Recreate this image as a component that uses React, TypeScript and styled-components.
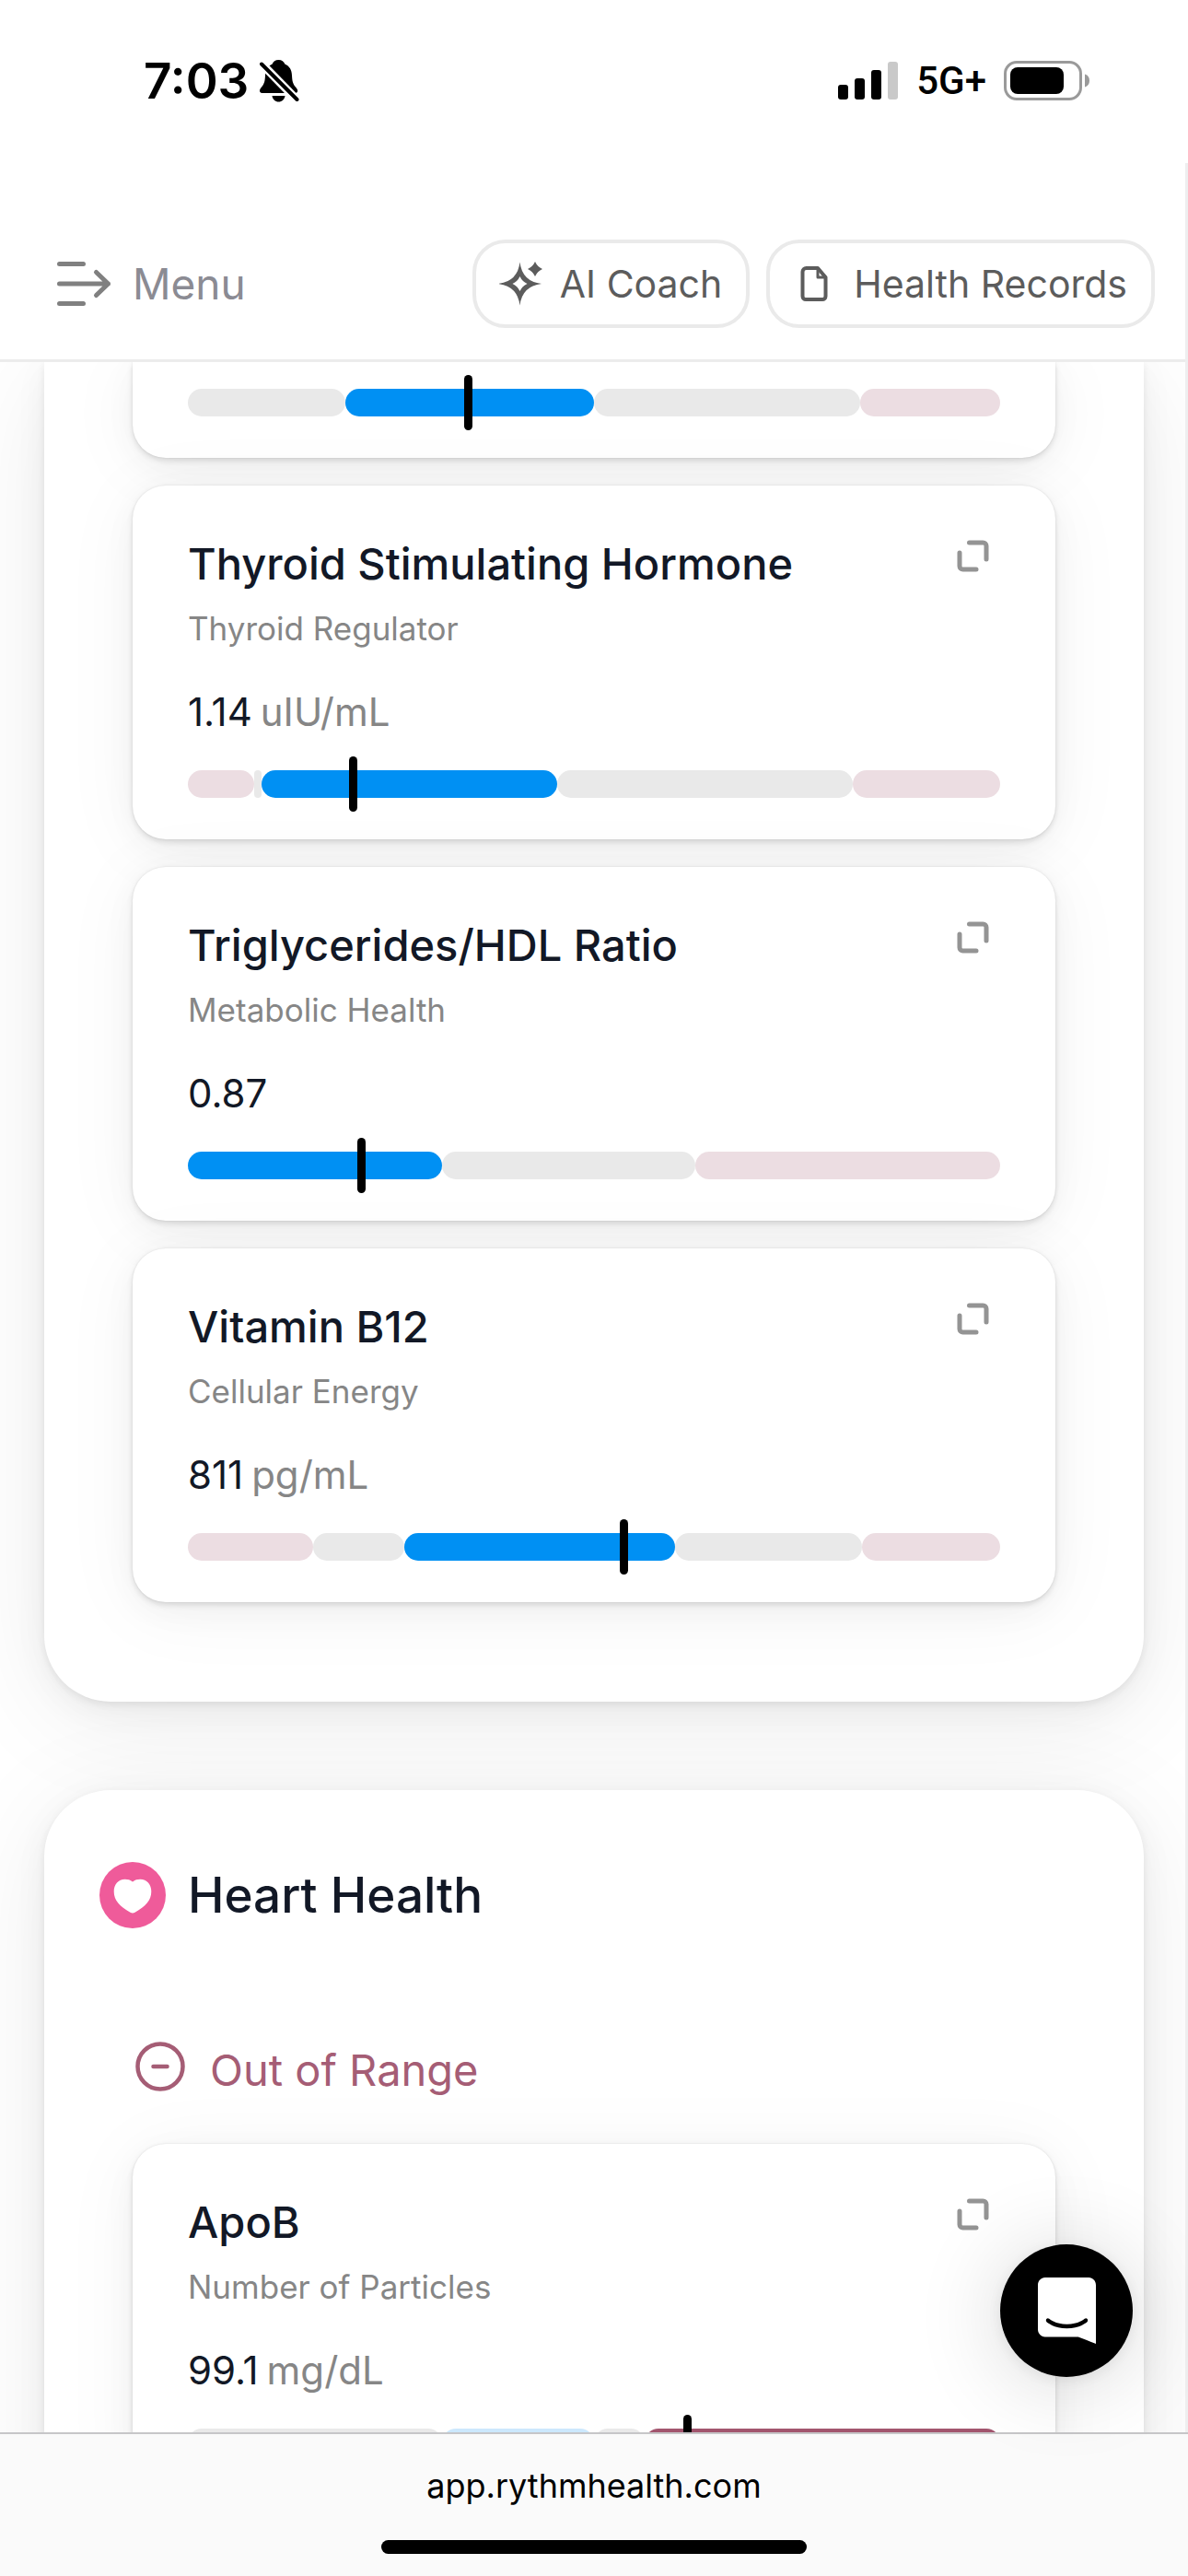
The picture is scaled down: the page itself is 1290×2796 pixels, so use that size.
import React from "react";
import styled, { createGlobalStyle } from "styled-components";

type Tone = "low" | "mid" | "good" | "goodMuted" | "bad";

interface Segment {
  tone: Tone;
  size: number;
}

interface Marker {
  name: string;
  role: string;
  value: string;
  unit?: string;
  segments: Segment[];
  position: number;
}

const tones: Record<Tone, string> = {
  low: "#ecdde2",
  mid: "#e9e9e9",
  good: "#0090f3",
  goodMuted: "#cce8fd",
  bad: "#a2556e",
};

const GlobalStyle = createGlobalStyle`
  * { box-sizing: border-box; }
  body {
    margin: 0;
    background: #ffffff;
    font-family: Inter, "Liberation Sans", sans-serif;
    color: #121826;
  }
  h2, h3, h4, p { margin: 0; font-weight: 400; }
  button { font-family: inherit; cursor: pointer; }
  svg { display: block; flex: none; }
`;

const Screen = styled.div`
  display: flex;
  flex-direction: column;
  height: 100vh;
  overflow: hidden;
  background: #ffffff;
`;

const StatusBar = styled.div`
  display: flex;
  justify-content: space-between;
  align-items: center;
  flex: none;
  height: 177px;
  padding: 0 106px 2px 156px;
  color: #000000;
`;

const StatusGroup = styled.div<{ $gap: number }>`
  display: flex;
  align-items: center;
  gap: ${(p) => p.$gap}px;
`;

const Clock = styled.span`
  font-size: 53px;
  line-height: 60px;
  font-weight: 600;
`;

const Network = styled.span`
  font-family: Roboto, sans-serif;
  font-size: 42px;
  line-height: 48px;
  font-weight: 500;
`;

const Page = styled.div`
  display: flex;
  flex-direction: column;
  flex: 1;
  min-height: 0;
  border-right: 3px solid #eeeeef;
`;

const Header = styled.header`
  display: flex;
  justify-content: space-between;
  align-items: center;
  flex: none;
  padding: 83px 33px 34px 60px;
  border-bottom: 3px solid #ececec;
  background: #ffffff;
`;

const MenuButton = styled.button`
  display: flex;
  align-items: center;
  gap: 22px;
  padding: 0;
  border: 0;
  background: none;
  color: #8b8b93;
  font-size: 46px;
  line-height: 60px;
`;

const Actions = styled.nav`
  display: flex;
  gap: 18px;
`;

const ActionButton = styled.button`
  display: flex;
  align-items: center;
  gap: 18px;
  height: 96px;
  padding: 0 26px 0 25px;
  border: 4px solid #eaeaea;
  border-radius: 36px;
  background: #ffffff;
  color: #5c5c5c;
  font-size: 41px;
  line-height: 60px;
  white-space: nowrap;
`;

const Content = styled.main`
  display: flex;
  flex-direction: column;
  gap: 96px;
  flex: 1;
  min-height: 0;
  overflow: hidden;
  padding: 0 45px 0 48px;
`;

const Panel = styled.section<{ $continued?: boolean }>`
  flex: none;
  padding: ${(p) => (p.$continued ? "0" : "78px")} 0 108px;
  border-radius: ${(p) => (p.$continued ? "0 0 72px 72px" : "72px")};
  background: #ffffff;
  box-shadow:
    0 3px 9px rgba(0, 0, 0, 0.07),
    0 9px 36px rgba(0, 0, 0, 0.05),
    0 18px 120px rgba(0, 0, 0, 0.08);
`;

const PanelHead = styled.div`
  display: flex;
  align-items: center;
  gap: 24px;
  padding: 0 60px;
  margin-bottom: 123px;
`;

const PanelTitle = styled.h2`
  font-size: 53px;
  line-height: 72px;
  font-weight: 500;
`;

const RangeHead = styled.div`
  display: flex;
  align-items: flex-start;
  gap: 24px;
  padding: 0 96px;
  margin-bottom: 49px;
  color: #a55d75;
`;

const RangeTitle = styled.h3`
  font-size: 47px;
  line-height: 62px;
`;

const CardList = styled.div`
  display: flex;
  flex-direction: column;
  gap: 30px;
  padding: 0 96px;
`;

const Card = styled.article<{ $continued?: boolean }>`
  padding: ${(p) => (p.$continued ? "29px" : "54px")} 60px 45px;
  border-radius: ${(p) => (p.$continued ? "0 0 36px 36px" : "36px")};
  background: #ffffff;
  box-shadow:
    0 0 2px rgba(0, 0, 0, 0.1),
    0 3px 6px rgba(0, 0, 0, 0.12),
    0 9px 36px rgba(0, 0, 0, 0.04),
    0 9px 84px rgba(0, 0, 0, 0.05);
`;

const CardHead = styled.div`
  display: flex;
  justify-content: space-between;
  align-items: flex-start;
`;

const CardTitle = styled.h4`
  font-size: 47px;
  line-height: 62px;
  font-weight: 500;
`;

const ExpandButton = styled.button`
  display: flex;
  padding: 5px 12px;
  border: 0;
  background: none;
  color: #949494;
`;

const Role = styled.p`
  margin-top: 15px;
  color: #868686;
  font-size: 35px;
  line-height: 48px;
`;

const Reading = styled.p`
  display: flex;
  gap: 9px;
  margin: 37px 0 33px;
  font-size: 42px;
  line-height: 60px;
`;

const Unit = styled.span`
  color: #868686;
`;

const Bar = styled.div`
  position: relative;
  display: flex;
  height: 30px;
`;

const BarSegment = styled.span<{ $tone: Tone }>`
  border-radius: 15px;
  background: ${(p) => tones[p.$tone]};
`;

const Pointer = styled.span`
  position: absolute;
  top: -15px;
  bottom: -15px;
  width: 9px;
  margin-left: -5px;
  border-radius: 5px;
  background: #000000;
`;

const ChatButton = styled.button`
  position: fixed;
  right: 60px;
  bottom: 216px;
  display: flex;
  justify-content: center;
  align-items: center;
  width: 144px;
  height: 144px;
  padding: 0;
  border: 0;
  border-radius: 50%;
  background: #000000;
  color: #ffffff;
  box-shadow:
    0 3px 18px rgba(0, 0, 0, 0.08),
    0 6px 96px rgba(0, 0, 0, 0.16);
`;

const BrowserBar = styled.footer`
  display: flex;
  flex-direction: column;
  align-items: center;
  justify-content: space-between;
  flex: none;
  height: 156px;
  padding: 32px 0 24px;
  border-top: 2px solid #c6c6c8;
  background: #fafafa;
`;

const Address = styled.a`
  color: #000000;
  font-size: 36px;
  line-height: 48px;
  text-decoration: none;
`;

const HomeIndicator = styled.span`
  width: 462px;
  height: 15px;
  border-radius: 8px;
  background: #000000;
`;

const BellOff = () => (
  <svg width="43" height="46" viewBox="0 0 43 46" aria-label="Silent mode">
    <path
      d="M20.500 0c3.500 0 5.800 1.800 6.800 4.600C32.500 7 34.800 11 35 17c.3 6 1 9 4 12.500 1.500 1.800 2.200 3 2.200 4 0 1.500-1 2.500-2.500 2.500H2.500C1 36 0 35 0 33.500c0-1 .5-2.200 2-4C5 26 5.700 23 6 17c.3-6 2.800-10 7.700-12.400C14.500 1.800 17 0 20.500 0z"
      fill="#000"
    />
    <path d="M13.500 39h14c-.6 4-3.400 6.500-7 6.500s-6.400-2.500-7-6.500z" fill="#000" />
    <path d="M-1 1l43 44" stroke="#fff" strokeWidth="9" />
    <path d="M2 4.500l38.500 38.500" stroke="#000" strokeWidth="4" strokeLinecap="round" />
  </svg>
);

const Signal = () => (
  <svg width="66" height="42" viewBox="0 0 66 42" aria-label="Signal strength">
    <rect x="0" y="25" width="11" height="16" rx="3" />
    <rect x="18" y="18" width="11" height="23" rx="3" />
    <rect x="36" y="9" width="11" height="32" rx="3" />
    <rect x="54" y="0" width="11" height="41" rx="3" fill="#c9c9c9" />
  </svg>
);

const Battery = () => (
  <svg width="94" height="44" viewBox="0 0 94 44" aria-label="Battery">
    <rect x="1.500" y="1.500" width="82" height="40" rx="12.500" fill="none" stroke="#9a9a9a" strokeWidth="3" />
    <rect x="7" y="7" width="58" height="29" rx="8" />
    <path d="M88 14.500c3.200 1 5 3.600 5 7s-1.800 6-5 7z" fill="#9a9a9a" />
  </svg>
);

const MenuIcon = () => (
  <svg width="62" height="50" viewBox="0 0 62 50" fill="none" stroke="#808080" strokeWidth="5" strokeLinecap="round" strokeLinejoin="round" aria-hidden>
    <path d="M4.500 3.500h26M4.500 25h53M4.500 46.500h26M44.500 12.500L57.500 25l-13 12.500" />
  </svg>
);

const SparkleIcon = () => (
  <svg width="48" height="48" viewBox="0 0 48 48" fill="#5c5c5c" aria-hidden>
    <path
      fillRule="evenodd"
      d="M22.500 0.500Q25 21.500 46 24 25 26.500 22.500 47.500 20 26.500 -1 24 20 21.500 22.500 0.500zM22.500 16Q25 21.500 30.500 24 25 26.500 22.500 32 20 26.500 14.500 24 20 21.500 22.500 16z"
    />
    <path d="M39 0Q41.500 5.500 47 8 41.500 10.500 39 16 36.500 10.500 31 8 36.500 5.500 39 0z" />
  </svg>
);

const FileIcon = () => (
  <svg width="48" height="42" viewBox="0 0 48 42" fill="none" stroke="#5c5c5c" strokeWidth="4" strokeLinejoin="round" aria-hidden>
    <path d="M14.500 4H27l8.500 10v20.500a3.500 3.500 0 0 1-3.500 3.500H14a3.500 3.500 0 0 1-3.500-3.500V8a4 4 0 0 1 4-4z" />
    <path d="M27 4v10h8.500" strokeWidth="3" />
  </svg>
);

const ExpandIcon = () => (
  <svg width="35" height="35" viewBox="0 0 35 35" fill="none" stroke="currentColor" strokeWidth="5" strokeLinecap="round" aria-hidden>
    <path d="M13.500 3H28.500A3.500 3.500 0 0 1 32 6.500V21M21 32H6.500A3.500 3.500 0 0 1 3 28.500V14" />
  </svg>
);

const HeartBadge = () => (
  <svg width="72" height="72" viewBox="0 0 72 72" aria-hidden>
    <circle cx="36" cy="36" r="36" fill="#ef5b9a" />
    <path
      d="M36 21.500c2.500-2 5.200-2.700 8.300-2.700 7.200 0 12 5.500 12 13.200 0 9.500-6.300 16.500-17.800 22.700-1.800 1-3.200 1-5 0C22 48.500 15.700 41.500 15.700 32c0-7.700 4.800-13.200 12-13.200 3.100 0 5.800.7 8.300 2.700z"
      fill="#fff"
    />
  </svg>
);

const MinusCircle = () => (
  <svg width="60" height="54" viewBox="0 0 60 54" fill="none" stroke="currentColor" strokeWidth="4.500" strokeLinecap="round" aria-hidden>
    <circle cx="30" cy="27" r="24.500" />
    <path d="M22.500 27h15" />
  </svg>
);

const ChatIcon = () => (
  <svg width="63" height="72" viewBox="0 0 28 32" fill="currentColor" aria-hidden>
    <path d="M28 32s-4.714-1.855-8.527-3.340H3.437C1.540 28.660 0 27.026 0 25.013V3.644C0 1.633 1.540 0 3.437 0h21.125c1.898 0 3.437 1.632 3.437 3.645v18.404H28V32zm-4.139-11.982a.88.88 0 00-1.292-.105c-.03.026-3.015 2.681-8.570 2.681-5.486 0-8.517-2.636-8.571-2.684a.88.88 0 00-1.290.107 1.010 1.010 0 00-.219.708.992.992 0 00.318.664c.142.128 3.537 3.150 9.762 3.150 6.226 0 9.621-3.022 9.763-3.150a.992.992 0 00.317-.664 1.010 1.010 0 00-.218-.707z" />
  </svg>
);

const BAR_TOTAL = 882;

const continuedBar: Pick<Marker, "segments" | "position"> = {
  segments: [
    { tone: "mid", size: 171 },
    { tone: "good", size: 270 },
    { tone: "mid", size: 289 },
    { tone: "low", size: 152 },
  ],
  position: 305,
};

const inRange: Marker[] = [
  {
    name: "Thyroid Stimulating Hormone",
    role: "Thyroid Regulator",
    value: "1.14",
    unit: "uIU/mL",
    segments: [
      { tone: "low", size: 72 },
      { tone: "mid", size: 8 },
      { tone: "good", size: 321 },
      { tone: "mid", size: 321 },
      { tone: "low", size: 160 },
    ],
    position: 180,
  },
  {
    name: "Triglycerides/HDL Ratio",
    role: "Metabolic Health",
    value: "0.87",
    segments: [
      { tone: "good", size: 276 },
      { tone: "mid", size: 275 },
      { tone: "low", size: 331 },
    ],
    position: 189,
  },
  {
    name: "Vitamin B12",
    role: "Cellular Energy",
    value: "811",
    unit: "pg/mL",
    segments: [
      { tone: "low", size: 136 },
      { tone: "mid", size: 99 },
      { tone: "good", size: 294 },
      { tone: "mid", size: 203 },
      { tone: "low", size: 150 },
    ],
    position: 474,
  },
];

const outOfRange: Marker[] = [
  {
    name: "ApoB",
    role: "Number of Particles",
    value: "99.1",
    unit: "mg/dL",
    segments: [
      { tone: "mid", size: 276 },
      { tone: "goodMuted", size: 165 },
      { tone: "mid", size: 55 },
      { tone: "bad", size: 386 },
    ],
    position: 543,
  },
];

const RangeBar = ({ segments, position }: Pick<Marker, "segments" | "position">) => (
  <Bar>
    {segments.map((s, i) => (
      <BarSegment key={i} $tone={s.tone} style={{ width: `${(s.size / BAR_TOTAL) * 100}%` }} />
    ))}
    <Pointer style={{ left: `${(position / BAR_TOTAL) * 100}%` }} />
  </Bar>
);

const MarkerCard = ({ marker }: { marker: Marker }) => (
  <Card>
    <CardHead>
      <CardTitle>{marker.name}</CardTitle>
      <ExpandButton aria-label={`Expand ${marker.name}`}>
        <ExpandIcon />
      </ExpandButton>
    </CardHead>
    <Role>{marker.role}</Role>
    <Reading>
      <span>{marker.value}</span>
      {marker.unit && <Unit>{marker.unit}</Unit>}
    </Reading>
    <RangeBar segments={marker.segments} position={marker.position} />
  </Card>
);

export default function App() {
  return (
    <Screen>
      <GlobalStyle />
      <StatusBar>
        <StatusGroup $gap={12}>
          <Clock>7:03</Clock>
          <BellOff />
        </StatusGroup>
        <StatusGroup $gap={19}>
          <Signal />
          <Network>5G+</Network>
          <Battery />
        </StatusGroup>
      </StatusBar>
      <Page>
        <Header>
          <MenuButton>
            <MenuIcon />
            Menu
          </MenuButton>
          <Actions>
            <ActionButton>
              <SparkleIcon />
              AI Coach
            </ActionButton>
            <ActionButton>
              <FileIcon />
              Health Records
            </ActionButton>
          </Actions>
        </Header>
        <Content>
          <Panel $continued>
            <CardList>
              <Card $continued>
                <RangeBar {...continuedBar} />
              </Card>
              {inRange.map((m) => (
                <MarkerCard key={m.name} marker={m} />
              ))}
            </CardList>
          </Panel>
          <Panel>
            <PanelHead>
              <HeartBadge />
              <PanelTitle>Heart Health</PanelTitle>
            </PanelHead>
            <RangeHead>
              <MinusCircle />
              <RangeTitle>Out of Range</RangeTitle>
            </RangeHead>
            <CardList>
              {outOfRange.map((m) => (
                <MarkerCard key={m.name} marker={m} />
              ))}
            </CardList>
          </Panel>
        </Content>
      </Page>
      <BrowserBar>
        <Address href="#">app.rythmhealth.com</Address>
        <HomeIndicator />
      </BrowserBar>
      <ChatButton aria-label="Open chat">
        <ChatIcon />
      </ChatButton>
    </Screen>
  );
}
